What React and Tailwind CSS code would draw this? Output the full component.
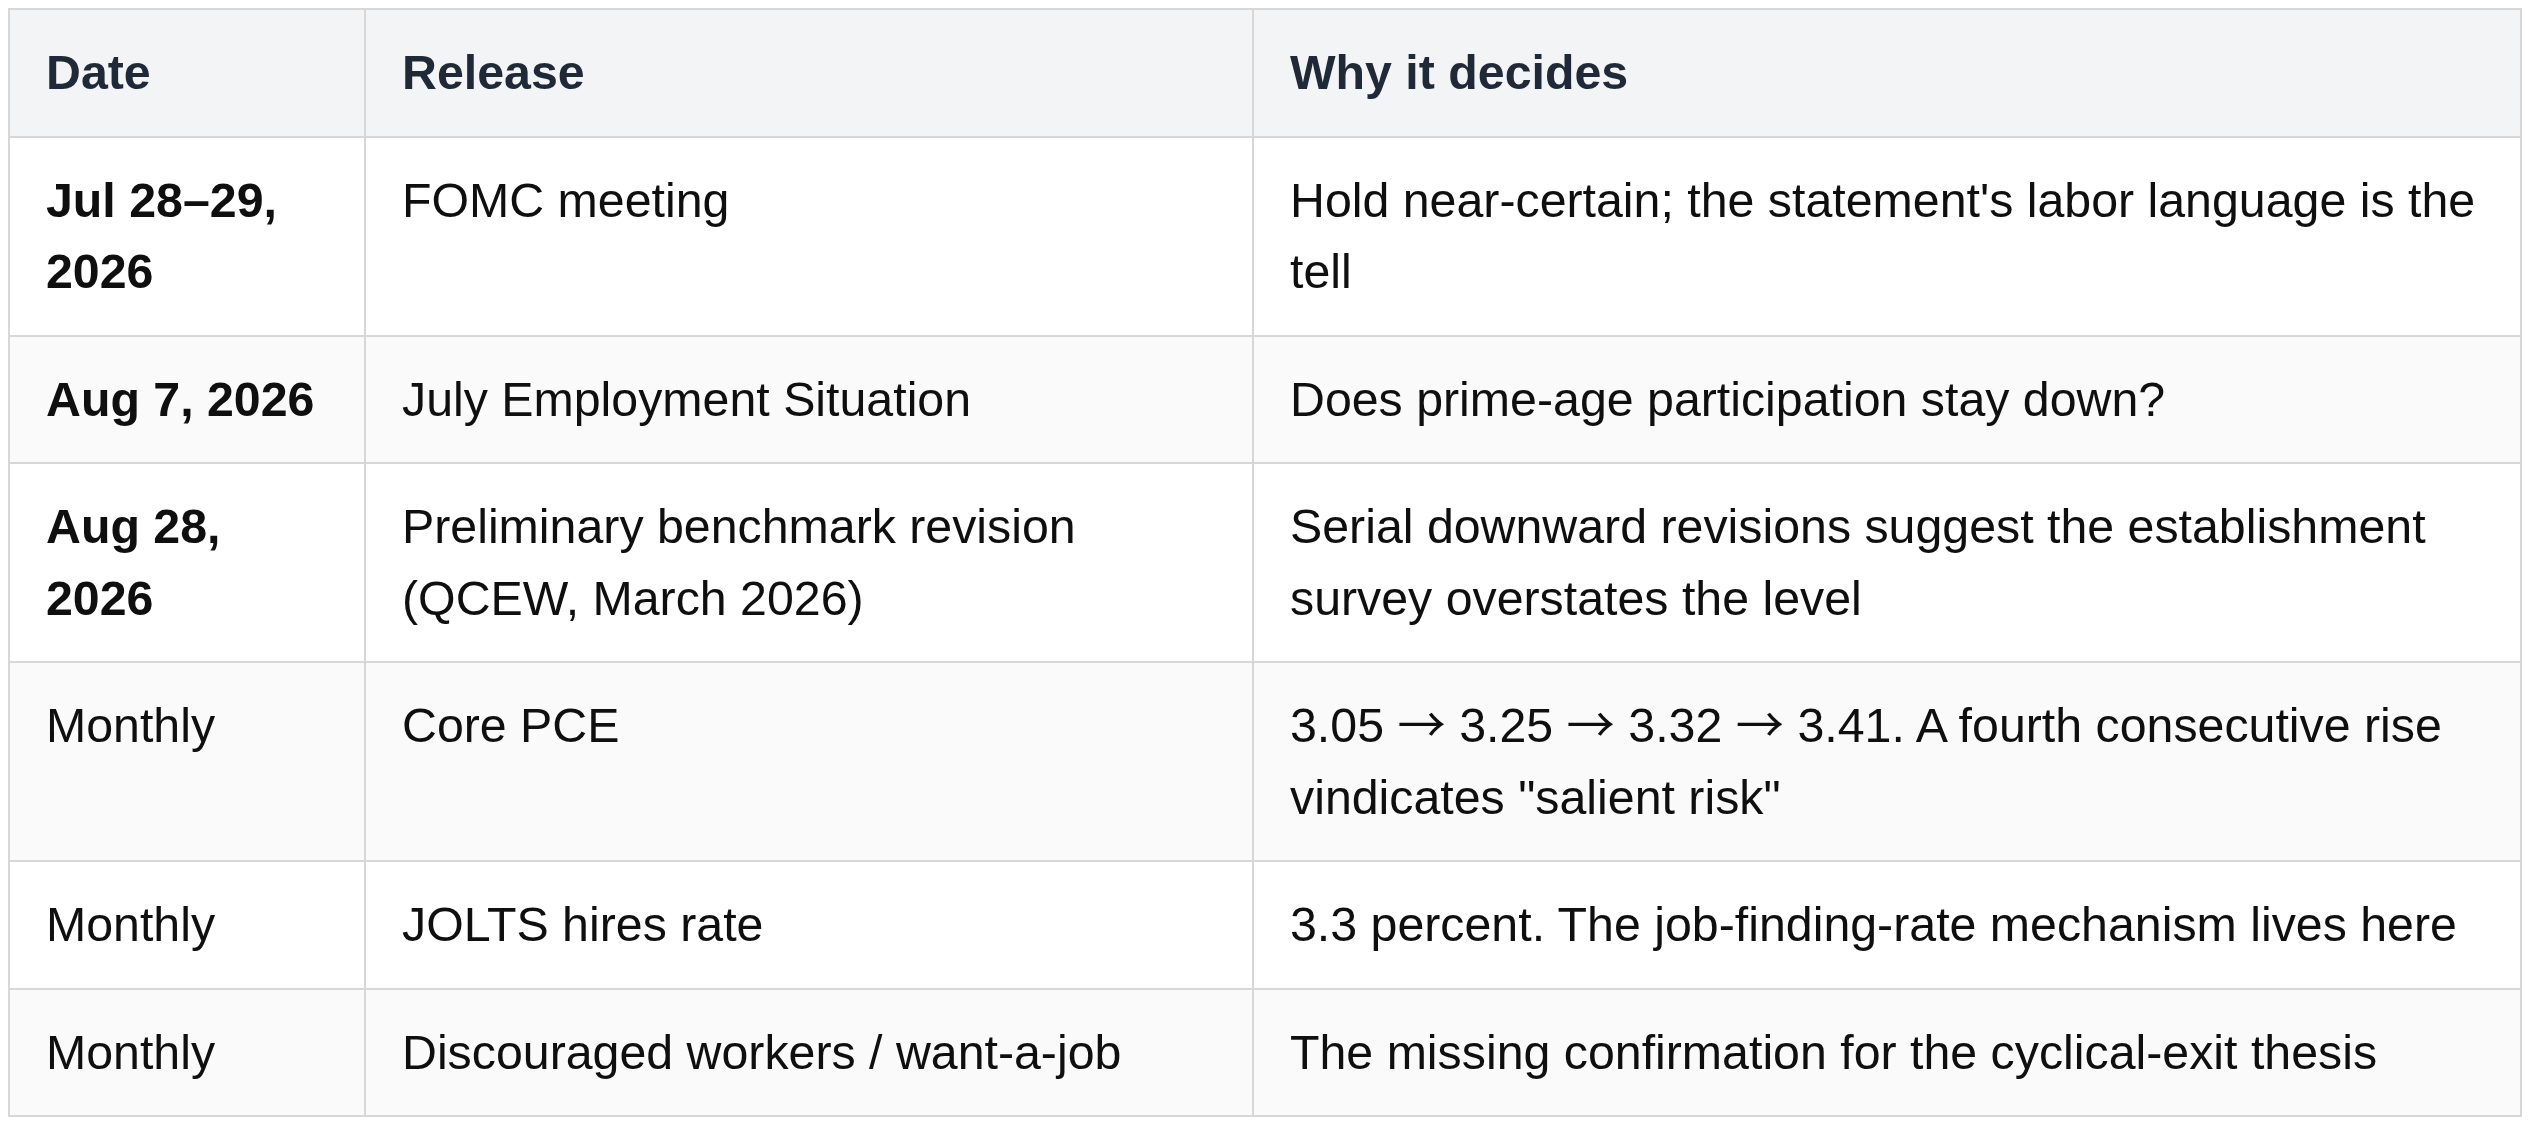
import React from 'react';

// Release calendar table
const COLUMNS = ['Date', 'Release', 'Why it decides'];

const Arrow = () => <span className="font-['Noto_Sans_CJK_JP',sans-serif] leading-none">→</span>;

const ROWS = [
    { date: 'Jul 28–29, 2026', bold: true, release: 'FOMC meeting', why: "Hold near-certain; the statement's labor language is the tell" },
    { date: 'Aug 7, 2026', bold: true, release: 'July Employment Situation', why: 'Does prime-age participation stay down?' },
    { date: 'Aug 28, 2026', bold: true, release: 'Preliminary benchmark revision (QCEW, March 2026)', why: 'Serial downward revisions suggest the establishment survey overstates the level' },
    {
        date: 'Monthly',
        bold: false,
        release: 'Core PCE',
        why: (
            <>
                3.05 <Arrow /> 3.25 <Arrow /> 3.32 <Arrow /> 3.41. A fourth consecutive rise vindicates "salient risk"
            </>
        ),
    },
    { date: 'Monthly', bold: false, release: 'JOLTS hires rate', why: '3.3 percent. The job-finding-rate mechanism lives here' },
    { date: 'Monthly', bold: false, release: 'Discouraged workers / want-a-job', why: 'The missing confirmation for the cyclical-exit thesis' },
];

const cellBase = 'border-2 border-[#d7d7d7] px-[36px] py-[27px] align-top text-left';

const App = () => {
    return (
        <div className="min-h-screen bg-white p-2 font-['Liberation_Sans',Arial,sans-serif] text-[48.3px] leading-[71.5px]">
            <table className="w-[2512px] table-fixed border-collapse">
                <colgroup>
                    <col className="w-[356px]" />
                    <col className="w-[888px]" />
                    <col className="w-[1268px]" />
                </colgroup>
                <thead>
                    <tr className="bg-[#f3f4f6]">
                        {COLUMNS.map((c) => (
                            <th key={c} className={`${cellBase} font-bold text-[#1f2937]`}>
                                {c}
                            </th>
                        ))}
                    </tr>
                </thead>
                <tbody className="text-[#0f0f0f]">
                    {ROWS.map((r, i) => (
                        <tr key={i} className={i % 2 === 1 ? 'bg-[#fafafa]' : 'bg-white'}>
                            <td className={`${cellBase} ${r.bold ? 'font-bold' : 'font-normal'}`}>{r.date}</td>
                            <td className={cellBase}>{r.release}</td>
                            <td className={cellBase}>{r.why}</td>
                        </tr>
                    ))}
                </tbody>
            </table>
        </div>
    );
};

export default App;
